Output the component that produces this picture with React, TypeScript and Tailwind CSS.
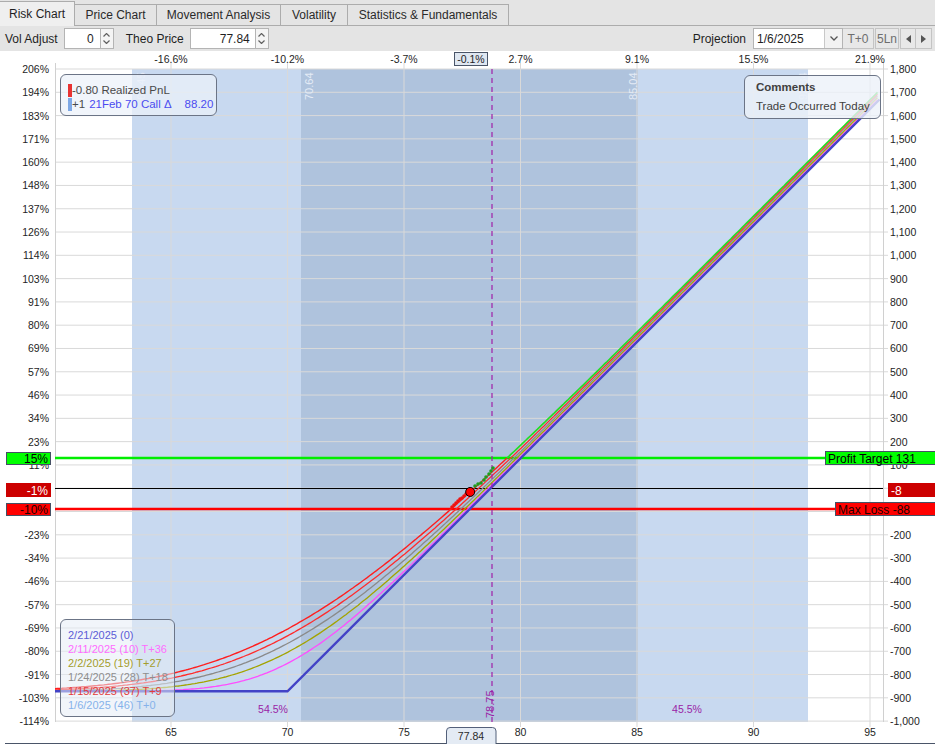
import React from "react";

const X = (p: number) => 171 + (p - 65) * 23.3;
const Y = (v: number) => 488.2 - v * 0.2329;

function ncdf(x: number) {
  const t = 1 / (1 + 0.2316419 * Math.abs(x));
  const d = 0.3989423 * Math.exp((-x * x) / 2);
  const p = d * t * (0.3193815 + t * (-0.3565638 + t * (1.781478 + t * (-1.821256 + t * 1.330274))));
  return x > 0 ? 1 - p : p;
}

function bsCall(s: number, k: number, t: number) {
  const sigma = 0.25;
  const r = 0.045;
  if (t <= 0) return Math.max(s - k, 0);
  const sq = sigma * Math.sqrt(t);
  const d1 = (Math.log(s / k) + (r + (sigma * sigma) / 2) * t) / sq;
  const d2 = d1 - sq;
  return s * ncdf(d1) - k * Math.exp(-r * t) * ncdf(d2);
}

const COST = 872;
const pnl = (s: number, days: number) => 100 * bsCall(s, 70, days / 365) - COST;

function curvePath(days: number) {
  let d = "";
  for (let p = 60.02; p <= 95.41; p += 0.1) {
    d += (d ? "L" : "M") + X(p).toFixed(1) + "," + Y(pnl(p, days)).toFixed(1);
  }
  return d;
}

// labels at rows 18 and 19 sit under the level boxes
const pctLabels = [
  "206%", "194%", "183%", "171%", "160%", "148%", "137%", "126%", "114%", "103%",
  "91%", "80%", "69%", "57%", "46%", "34%", "23%", "11%", "", "",
  "-23%", "-34%", "-46%", "-57%", "-69%", "-80%", "-91%", "-103%", "-114%",
];

const topPct = ["-16.6%", "-10.2%", "-3.7%", "2.7%", "9.1%", "15.5%", "21.9%"];
const prices = [65, 70, 75, 80, 85, 90, 95];

const curves = [
  { days: 10, color: "#ff4cff" },
  { days: 19, color: "#a3a300" },
  { days: 28, color: "#8a8a8a" },
  { days: 37, color: "#ff2b2b" },
];

const legendRows = [
  { text: "2/21/2025 (0)", color: "#5c5cd6" },
  { text: "2/11/2025 (10) T+36", color: "#ff6cff" },
  { text: "2/2/2025 (19) T+27", color: "#a39d2c" },
  { text: "1/24/2025 (28) T+18", color: "#8e8e8e" },
  { text: "1/15/2025 (37) T+9", color: "#e23c3c" },
  { text: "1/6/2025 (46) T+0", color: "#86b2ea" },
];

const redTrail = [
  [452, 507], [454, 505], [456, 503], [458, 501], [460, 499], [462, 498], [464, 496], [466, 494],
];
const greenTrail = [
  [475, 486], [478, 484], [481, 483], [484, 480], [486, 477], [489, 474], [491, 471], [493, 468],
];

function Spinner() {
  return (
    <div className="flex h-[21px] w-[13px] flex-col items-center justify-center gap-[3px] border border-l-0 border-[#b4b4b4] bg-[#f4f4f4]">
      <svg width="7" height="4" viewBox="0 0 7 4">
        <path d="M0.5 3.5 L3.5 0.5 L6.5 3.5" fill="none" stroke="#606060" strokeWidth="1.2" />
      </svg>
      <svg width="7" height="4" viewBox="0 0 7 4">
        <path d="M0.5 0.5 L3.5 3.5 L6.5 0.5" fill="none" stroke="#606060" strokeWidth="1.2" />
      </svg>
    </div>
  );
}

function Chart() {
  const tplus0 = curvePath(46);
  const exp = `M${X(60.02)},${Y(-COST)}L${X(70)},${Y(-COST)}L${X(95.41)},${Y(2541 - COST)}`;
  const dotY = Y(pnl(77.84, 46));
  const rows = pctLabels.map((_, i) => 69 + i * 23.29);

  return (
    <svg width="935" height="693" viewBox="0 51 935 693" className="block">
      <defs>
        <clipPath id="above">
          <rect x="0" y="0" width="935" height="458" />
        </clipPath>
        <clipPath id="below">
          <rect x="0" y="458" width="935" height="300" />
        </clipPath>
        <clipPath id="plot">
          <rect x="55" y="60" width="833" height="662" />
        </clipPath>
      </defs>
      <rect x="0" y="51" width="935" height="693" fill="#ffffff" />

      {/* ranges */}
      <rect x="132" y="69" width="676" height="653" fill="#c8d9f0" />
      <rect x="301" y="69" width="337" height="653" fill="#afc3dd" />

      {/* grid */}
      {rows.map((y, i) => (
        <line key={i} x1="55" x2="888" y1={y} y2={y} stroke="#d9d9d9" strokeWidth="1" />
      ))}
      {prices.map((p) => (
        <line key={p} x1={X(p)} x2={X(p)} y1="63" y2="727" stroke="#d9d9d9" strokeWidth="1" />
      ))}
      <line x1="55.5" x2="55.5" y1="63" y2="722" stroke="#d0d0d0" />
      <line x1="883.5" x2="883.5" y1="63" y2="722" stroke="#d0d0d0" />

      {/* range labels */}
      <g fontSize="11" fill="#e4ebf6">
        <text transform="translate(145,100) rotate(-90)">63.45</text>
        <text transform="translate(313,100) rotate(-90)">70.64</text>
        <text transform="translate(637,100) rotate(-90)">85.04</text>
        <text transform="translate(807,100) rotate(-90)">92.34</text>
      </g>

      {/* axes labels */}
      <g fontSize="10.5" fill="#1e1e1e">
        {rows.map((y, i) =>
          pctLabels[i] ? (
            <text key={i} x="49" y={y + 4} textAnchor="end">{pctLabels[i]}</text>
          ) : null
        )}
        {rows.map((y, i) =>
          i === 18 || i === 19 ? null : (
            <text key={i} x="890" y={y + 4}>{(1800 - i * 100).toLocaleString("en-US")}</text>
          )
        )}
        {prices.map((p, i) => (
          <text key={p} x={X(p)} y="63" textAnchor="middle">{topPct[i]}</text>
        ))}
        {prices.map((p) => (
          <text key={p} x={X(p)} y="736" textAnchor="middle">{p}</text>
        ))}
      </g>

      {/* horizontal levels */}
      <line x1="55" x2="883" y1="458" y2="458" stroke="#00ee00" strokeWidth="2.5" />
      <line x1="55" x2="883" y1="488.5" y2="488.5" stroke="#000000" strokeWidth="1" />
      <line x1="55" x2="883" y1="509" y2="509" stroke="#ff0000" strokeWidth="2.5" />

      {/* curves */}
      <g clipPath="url(#plot)" fill="none">
        {curves.map((c) => (
          <path key={c.days} d={curvePath(c.days)} stroke={c.color} strokeWidth="1.3" />
        ))}
        <path d={tplus0} stroke="#ff1e1e" strokeWidth="1.4" clipPath="url(#below)" />
        <path d={tplus0} stroke="#22dd22" strokeWidth="1.6" clipPath="url(#above)" />
        <path d={exp} stroke="#4343c6" strokeWidth="2.4" />
      </g>

      {/* current price line */}
      <line x1="492" x2="492" y1="69" y2="722" stroke="#a020a8" strokeWidth="1.2" strokeDasharray="5 4" />
      <text transform="translate(494,718) rotate(-90)" fontSize="11" fill="#9a1ea6">78.75</text>
      <text x="273" y="713" fontSize="10.5" fill="#9a1ea6" textAnchor="middle">54.5%</text>
      <text x="687" y="713" fontSize="10.5" fill="#9a1ea6" textAnchor="middle">45.5%</text>

      {/* trails */}
      {redTrail.map(([x, y], i) => (
        <circle key={i} cx={x} cy={y} r="1.8" fill="#ee1111" />
      ))}
      {greenTrail.map(([x, y], i) => (
        <circle key={i} cx={x} cy={y} r="1.8" fill="#1e9e1e" />
      ))}
      <circle cx={X(77.84)} cy={dotY} r="4.5" fill="#ff0000" stroke="#000000" strokeWidth="1" />

      {/* level boxes */}
      <g fontSize="12">
        <rect x="6.5" y="452.5" width="44" height="12" fill="#00ff00" stroke="#455064" />
        <text x="48" y="463" textAnchor="end" fill="#000">15%</text>
        <rect x="6" y="483" width="45" height="14" fill="#cc0000" />
        <text x="48" y="494.5" textAnchor="end" fill="#ffffff">-1%</text>
        <rect x="6.5" y="503.5" width="44" height="12" fill="#ff0000" stroke="#455064" />
        <text x="48" y="514" textAnchor="end" fill="#200000">-10%</text>

        <rect x="825.5" y="451.5" width="112" height="13" fill="#00ff00" stroke="#455064" />
        <text x="828" y="462.5" fill="#000">Profit Target 131</text>
        <rect x="888" y="483" width="47" height="14" fill="#cc0000" />
        <text x="891" y="494.5" fill="#ffffff">-8</text>
        <rect x="835.5" y="502.5" width="102" height="13" fill="#ff0000" stroke="#455064" />
        <text x="838" y="513.5" fill="#200000">Max Loss -88</text>
      </g>

      {/* top marker */}
      <rect x="454.5" y="52.5" width="33" height="13" fill="#dfe7f1" stroke="#4a5568" />
      <text x="471" y="62.5" fontSize="10.5" textAnchor="middle" fill="#1e1e1e">-0.1%</text>

      {/* bottom marker */}
      <path d="M446.5 744 L446.5 731 Q446.5 727.5 450 727.5 L492.5 727.5 Q496 727.5 496 731 L496 744" fill="#e4ebf4" stroke="#53607a" />
      <text x="471" y="740" fontSize="10.5" textAnchor="middle" fill="#2a2a2a">77.84</text>
      <line x1="5" x2="446" y1="743.5" y2="743.5" stroke="#4a5568" />
      <line x1="496" x2="935" y1="743.5" y2="743.5" stroke="#4a5568" />
    </svg>
  );
}

export default function App() {
  const tabs = ["Price Chart", "Movement Analysis", "Volatility", "Statistics & Fundamentals"];
  const widths = ["w-[82px]", "w-[124px]", "w-[67px]", "w-[161px]"];

  return (
    <div className="h-[744px] w-[935px] overflow-hidden bg-[#e4e4e4] font-['Liberation_Sans',Arial,sans-serif] text-[12px] text-[#1f1f1f]">
      {/* tabs */}
      <div className="flex h-[26px] items-end">
        <div className="flex h-[25px] w-[75px] items-center justify-center border border-b-0 border-l-0 border-[#acacac] bg-[#efefef]">
          Risk Chart
        </div>
        {tabs.map((t, i) => (
          <div
            key={t}
            className={`flex h-[22px] ${widths[i]} items-center justify-center border border-l-0 border-[#acacac] bg-[#e4e4e4] text-[#2a2a2a]`}
          >
            {t}
          </div>
        ))}
        <div className="h-[1px] flex-1 bg-[#acacac]" />
      </div>

      {/* toolbar */}
      <div className="flex h-[25px] items-center pl-[5px] pr-[3px]">
        <span>Vol Adjust</span>
        <div className="ml-[6px] flex h-[21px] w-[37px] items-center justify-end border border-[#b4b4b4] bg-white pr-[6px]">
          0
        </div>
        <Spinner />
        <span className="ml-[12px]">Theo Price</span>
        <div className="ml-[6px] flex h-[21px] w-[66px] items-center justify-end border border-[#b4b4b4] bg-white pr-[5px]">
          77.84
        </div>
        <Spinner />

        <span className="ml-auto">Projection</span>
        <div className="ml-[7px] flex h-[21px] w-[90px] items-center border border-[#b4b4b4] bg-white">
          <span className="flex-1 pl-[3px]">1/6/2025</span>
          <div className="flex h-full w-[18px] items-center justify-center border-l border-[#c8c8c8] bg-[#f2f2f2]">
            <svg width="8" height="5" viewBox="0 0 8 5">
              <path d="M0.5 0.5 L4 4 L7.5 0.5" fill="none" stroke="#555" strokeWidth="1.3" />
            </svg>
          </div>
        </div>
        <div className="flex h-[21px] w-[31px] items-center justify-center border border-l-0 border-[#c4c4c4] bg-[#e8e8e8] text-[#6e6e6e]">
          T+0
        </div>
        <div className="ml-[1px] flex h-[21px] w-[24px] items-center justify-center border border-[#c4c4c4] bg-[#e8e8e8] text-[#6e6e6e]">
          5Ln
        </div>
        <div className="ml-[1px] flex h-[21px] w-[16px] items-center justify-center border border-[#c4c4c4] bg-[#e8e8e8]">
          <svg width="5" height="8" viewBox="0 0 5 8">
            <path d="M5 0 L0 4 L5 8 Z" fill="#555" />
          </svg>
        </div>
        <div className="flex h-[21px] w-[16px] items-center justify-center border border-l-0 border-[#c4c4c4] bg-[#e8e8e8]">
          <svg width="5" height="8" viewBox="0 0 5 8">
            <path d="M0 0 L5 4 L0 8 Z" fill="#555" />
          </svg>
        </div>
      </div>

      {/* chart */}
      <div className="relative h-[693px]">
        <Chart />

        <div className="absolute left-[60px] top-[23px] h-[42px] w-[157px] whitespace-nowrap rounded-[6px] border border-[#6b7486] bg-[rgba(236,241,249,0.72)] pl-[7px] pt-[8px] text-[11.5px] leading-[14px]">
          <div className="flex items-center">
            <span className="h-[13px] w-[4px] bg-[#e83232]" />
            <span className="text-[#4a4a4a]">-0.80 Realized PnL</span>
          </div>
          <div className="flex items-center">
            <span className="h-[13px] w-[4px] bg-[#7ea8e6]" />
            <span className="text-[#4a4a4a]">+1</span>
            <span className="ml-[4px] text-[#4b4bf0]">21Feb 70 Call Δ</span>
            <span className="ml-[13px] text-[#4b4bf0]">88.20</span>
          </div>
        </div>

        <div className="absolute left-[744px] top-[24px] h-[44px] w-[137px] whitespace-nowrap rounded-[6px] border border-[#6b7486] bg-[rgba(236,241,249,0.8)] pl-[11px] pt-[2px] text-[11.5px] leading-[19px] text-[#404040]">
          <div className="font-bold">Comments</div>
          <div>Trade Occurred Today</div>
        </div>

        <div className="absolute left-[60px] top-[568px] h-[98px] w-[115px] whitespace-nowrap rounded-[6px] border border-[#6b7486] bg-[rgba(230,236,246,0.55)] pl-[7px] pt-[8px] text-[11px] leading-[14px]">
          {legendRows.map((r) => (
            <div key={r.text} style={{ color: r.color }}>
              {r.text}
            </div>
          ))}
        </div>
      </div>
    </div>
  );
}
